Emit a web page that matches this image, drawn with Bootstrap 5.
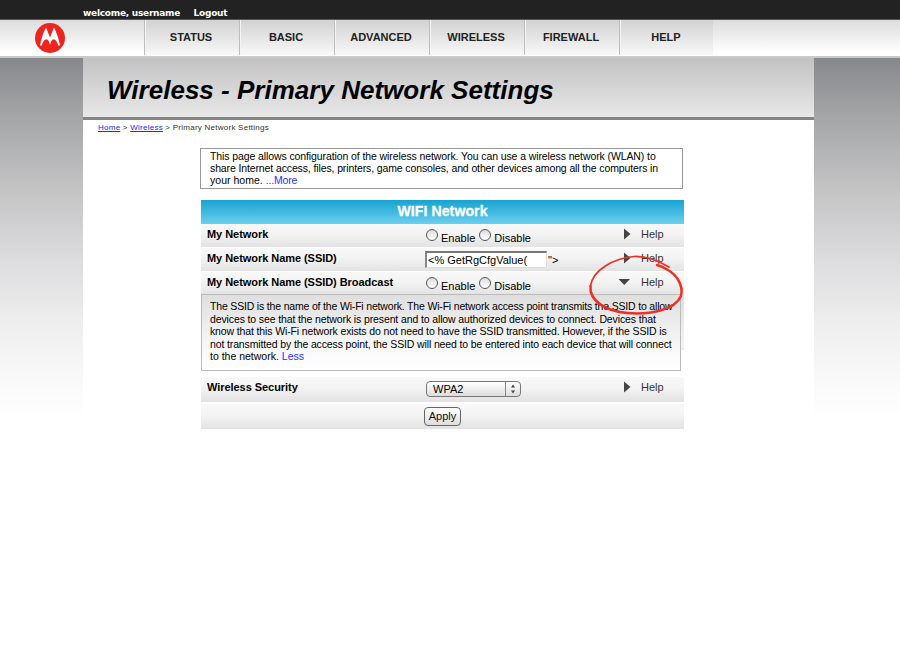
<!DOCTYPE html>
<html lang="en">
<head>
<meta charset="utf-8">
<meta name="viewport" content="width=device-width, initial-scale=1">
<title>Wireless - Primary Network Settings</title>
<link href="https://cdn.jsdelivr.net/npm/bootstrap@5.3.0/dist/css/bootstrap.min.css" rel="stylesheet">
<style>
body{font-family:"Liberation Sans",Arial,sans-serif;font-size:11px;line-height:12px;color:#111;background:#fff;height:651px;overflow:hidden}
.topbar{height:20px;background:#222;border-bottom:1px solid #555;padding:8px 0 0 83px;font:bold 9px/11px "DejaVu Sans",Verdana,sans-serif;letter-spacing:-.25px;gap:13.500px}
.topbar a{color:#fff}
.mainnav{height:38px;background:linear-gradient(#dcdcdc,#fff 90%);border-bottom:2px solid #c9c9c9;padding:0}
.brand{width:144px;height:36px;padding:3px 0 0 35px}
.tab{width:95px;height:35px;border-left:1px solid #bdbdbd;box-shadow:inset 1px 0 #f4f4f4;background:linear-gradient(#d2d2d2,#f8f8f8);color:#222;font-weight:bold;font-size:11px;padding:11px 2px 0 0;text-align:center}
.tab:last-child{width:94px;padding-right:1px}
.stage{height:593px;background:linear-gradient(#87888b,#a5a6a8 60px,#c5c5c6 135px,#dddde0 205px,#eee 265px,#f7f7f7 310px,#fff 360px);padding:0 86px 0 83px}
.sheet{background:#fff;height:593px}
.hero{height:62px;background:linear-gradient(#c2c2c2,#e8e8e8);border-bottom:3px solid #858585;padding:16px 0 0 24px}
.hero h1{font-size:26px;line-height:32px;font-weight:bold;font-style:italic;color:#000;margin:0;white-space:nowrap;letter-spacing:.015px}
.crumbs{font-size:8px;letter-spacing:.25px;line-height:10px;padding:3px 0 0 15px;height:28px;color:#333}
.crumbs a{color:#1a2bff}
.intro{width:483px;height:41px;margin-left:117px;border:1px solid #999;padding:1px 0 0 9px;white-space:nowrap;font-size:10.500px;letter-spacing:-.1px;color:#000}
.intro div:nth-child(2){letter-spacing:-.12px}
.intro div:last-child{letter-spacing:.02px;margin-right:0}
.intro .blue{letter-spacing:-.15px}
.blue{color:#1f2fff}
.panel{width:483px;margin:11px 0 0 118px;position:relative}
.panel-title{height:24px;background:linear-gradient(#17a3d0,#6ccfee);color:#fff;font-weight:bold;font-size:14px;letter-spacing:.12px;-webkit-text-stroke:.3px #fff;line-height:23px;text-align:center}
.setting{height:23px;margin-bottom:1px;background:linear-gradient(#f9f9f9,#f3f3f3 45%,#e2e2e2);padding-left:6px}
.setting .name{width:218px;font-weight:bold;padding-top:4px;color:#000;letter-spacing:-.05px}
.setting .ctl{width:198px;white-space:nowrap;color:#000}
.setting .hlp{color:#333;padding-top:4px;gap:7px;white-space:nowrap}
.hlp svg{width:11px;height:12px;fill:#444}
.dot{width:12px;height:12px;border:1px solid #555;border-radius:50%;background:linear-gradient(#ddd,#fff);margin:5px 3px 0 1px}
.dot + .lbl + .dot{margin-left:4px}
.lbl{padding-top:8px}
.entry{width:122px;height:17px;border:1px solid #ddd;border-top:2px solid #777;border-left:2px solid #888;background:#fff;margin:3px 1px 0 0;padding-left:1px;line-height:14px;font-size:11px}
.tail{padding-top:6px}
.drawer{margin-top:-2px;background:linear-gradient(#ddd,#f5f5f5 54px,#ddd 55px,#fff 56px)}
.explain{width:480px;height:77px;border:1px solid #bbb;background:linear-gradient(#dfdfdf,#f7f7f7 50px,#fff);padding:5px 0 0 8px;line-height:12.600px;white-space:nowrap;font-size:10.500px;letter-spacing:-.13px;color:#000}
.explain div:first-child{letter-spacing:-.175px}
.explain div:nth-child(2){letter-spacing:-.12px}
.explain div:last-child{letter-spacing:0}
.sec{height:25px;margin-top:6px;margin-bottom:2px}
.last{height:25px}
.picker{width:95px;height:16px;border:1px solid #777;border-radius:4px;background:linear-gradient(#fff,#ddd);margin:4px 0 0 1px;padding-left:6px;line-height:15px}
.picker svg{border-left:1px solid #888;width:15px;height:14px;fill:#444}
.push{width:37px;height:19px;border:1px solid #666;border-radius:4px;background:linear-gradient(#fff,#ddd);color:#111;font-size:11px;line-height:17px;padding:0;margin:3px 0 0 217px}
.ring{position:absolute;left:384px;top:50px;width:104px;height:70px;fill:none;stroke:#ee3026;stroke-linecap:round;stroke-linejoin:round}
</style>
<script src="https://cdn.jsdelivr.net/npm/bootstrap@5.3.0/dist/js/bootstrap.bundle.min.js"></script>
</head>
<body>
<header>
  <div class="topbar d-flex"><span class="text-white">welcome, username</span><a class="text-decoration-none" href="#">Logout</a></div>
  <nav class="mainnav navbar d-flex flex-nowrap justify-content-start align-items-start">
    <a class="brand d-block" href="#" aria-label="Motorola"><svg class="d-block" width="30" height="30" viewBox="0 0 30 30"><circle cx="15" cy="15" r="15" fill="#ee2420"/><path fill="#fff" d="M11 4.500L15 14.500L19 4.500C21.400 9 23.700 15.500 25 22.500L23.200 22.500C22.100 18.500 20.400 16.300 18.700 16.300C17 16.300 15.600 18.700 15 22C14.400 18.700 13 16.300 11.300 16.300C9.600 16.300 7.900 18.500 6.800 22.500L5 22.500C6.300 15.500 8.600 9 11 4.500Z"/></svg></a>
    <a class="tab text-decoration-none" href="#">STATUS</a><a class="tab text-decoration-none" href="#">BASIC</a><a class="tab text-decoration-none" href="#">ADVANCED</a><a class="tab text-decoration-none" href="#">WIRELESS</a><a class="tab text-decoration-none" href="#">FIREWALL</a><a class="tab text-decoration-none" href="#">HELP</a>
  </nav>
</header>
<div class="stage">
  <main class="sheet">
    <div class="hero"><h1>Wireless - Primary Network Settings</h1></div>
    <div class="crumbs"><a href="#">Home</a> &gt; <a href="#">Wireless</a> &gt; Primary Network Settings</div>
    <div class="intro"><div>This page allows configuration of the wireless network. You can use a wireless network (WLAN) to</div><div>share Internet access, files, printers, game consoles, and other devices among all the computers in</div><div>your home. <span class="blue">...More</span></div></div>
    <section class="panel">
      <div class="panel-title">WIFI Network</div>
      <div class="setting d-flex"><div class="name">My Network</div><div class="ctl d-flex"><i class="dot"></i><span class="lbl">Enable</span><i class="dot"></i><span class="lbl">Disable</span></div><div class="hlp d-flex"><svg viewBox="0 0 11 12"><path d="M1 0.500L7.500 6L1 11.500Z"/></svg>Help</div></div>
      <div class="setting d-flex"><div class="name">My Network Name (SSID)</div><div class="ctl d-flex"><div class="entry">&lt;% GetRgCfgValue(</div><span class="tail">"&gt;</span></div><div class="hlp d-flex"><svg viewBox="0 0 11 12"><path d="M1 0.500L7.500 6L1 11.500Z"/></svg>Help</div></div>
      <div class="setting d-flex"><div class="name">My Network Name (SSID) Broadcast</div><div class="ctl d-flex"><i class="dot"></i><span class="lbl">Enable</span><i class="dot"></i><span class="lbl">Disable</span></div><div class="hlp d-flex"><svg class="overflow-visible" viewBox="0 0 11 12"><path d="M-4.500 3L7 3L1.300 9Z"/></svg>Help</div></div>
      <div class="drawer"><div class="explain"><div>The SSID is the name of the Wi-Fi network. The Wi-Fi network access point transmits the SSID to allow</div><div>devices to see that the network is present and to allow authorized devices to connect. Devices that</div><div>know that this Wi-Fi network exists do not need to have the SSID transmitted. However, if the SSID is</div><div>not transmitted by the access point, the SSID will need to be entered into each device that will connect</div><div>to the network. <span class="blue">Less</span></div></div></div>
      <div class="setting sec d-flex"><div class="name">Wireless Security</div><div class="ctl d-flex"><div class="picker d-flex justify-content-between">WPA2<svg viewBox="0 0 14 14"><path d="M5 5.500L7 2.500L9 5.500ZM5 8.500L9 8.500L7 11.500Z"/></svg></div></div><div class="hlp d-flex"><svg viewBox="0 0 11 12"><path d="M1 0.500L7.500 6L1 11.500Z"/></svg>Help</div></div>
      <div class="setting last d-flex"><button class="btn push" type="button">Apply</button></div>
      <svg class="ring" viewBox="0 0 104 70"><path stroke-width="1.700" d="M84 17C72 10 60 6 49 6.500C29 8 8 20 5.500 36"/><path stroke-width="2.500" d="M5.500 36C4 51 21 61 42 63C65 65 90 60 96 46C99 34 90 24 83 20C79 17.500 76 16 72 15"/></svg>
    </section>
  </main>
</div>
</body>
</html>
